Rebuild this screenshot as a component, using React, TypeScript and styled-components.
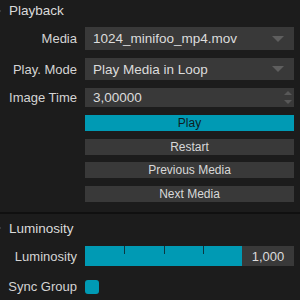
import styled, { createGlobalStyle } from 'styled-components'

const GlobalStyle = createGlobalStyle`
  html, body {
    margin: 0;
    padding: 0;
    background: #1c1c1c;
  }
  body {
    width: 300px;
    height: 300px;
    overflow: hidden;
    font-family: "Liberation Sans", Arial, sans-serif;
  }
`

const Panel = styled.div`
  width: 300px;
  height: 300px;
  background: #1c1c1c;
  color: #d6d6d6;
  display: flex;
  flex-direction: column;
`

const Section = styled.section<{ $last?: boolean }>`
  display: flex;
  flex-direction: column;
  padding-bottom: ${p => (p.$last ? '0' : '10px')};
  border-bottom: ${p => (p.$last ? 'none' : '2px solid #101010')};
`

const Header = styled.div<{ $h: number }>`
  position: relative;
  height: ${p => p.$h}px;
  display: flex;
  align-items: center;
  padding-left: 9px;
  font-size: 13.5px;
  color: #dadada;
`

const Disclosure = styled.span`
  position: absolute;
  left: -3px;
  top: 50%;
  margin-top: -3px;
  width: 0;
  height: 0;
  border-top: 3px solid transparent;
  border-bottom: 3px solid transparent;
  border-left: 4px solid #6a6a6a;
`

const Row = styled.div<{ $h: number; $mt?: number }>`
  display: grid;
  grid-template-columns: 85px 1fr;
  height: ${p => p.$h}px;
  margin-top: ${p => p.$mt ?? 0}px;
  padding-right: 6px;
  align-items: center;
`

const Label = styled.div`
  text-align: right;
  padding-right: 8px;
  font-size: 13px;
  color: #d4d4d4;
  white-space: nowrap;
`

const Field = styled.div`
  position: relative;
  height: 100%;
  background: #393939;
  display: flex;
  align-items: center;
  padding-left: 8px;
  font-size: 13.5px;
  color: #dcdcdc;
`

const Caret = styled.span`
  position: absolute;
  right: 10px;
  top: 50%;
  margin-top: -3px;
  width: 0;
  height: 0;
  border-left: 6px solid transparent;
  border-right: 6px solid transparent;
  border-top: 6px solid #5e5e5e;
`

const Spinner = styled.span`
  position: absolute;
  right: 1px;
  top: 3px;
  bottom: 3px;
  width: 10px;
  display: flex;
  flex-direction: column;
  justify-content: space-between;
  align-items: center;
`

const Arrow = styled.span<{ $up?: boolean }>`
  width: 0;
  height: 0;
  border-left: 4px solid transparent;
  border-right: 4px solid transparent;
  ${p => (p.$up ? 'border-bottom: 4px solid #585858;' : 'border-top: 4px solid #585858;')}
`

const Button = styled.div<{ $active?: boolean }>`
  height: 100%;
  display: flex;
  align-items: center;
  justify-content: center;
  font-size: 12px;
  background: ${p => (p.$active ? '#009ab4' : '#393939')};
  color: ${p => (p.$active ? '#0e1d22' : '#d8d8d8')};
`

const Slider = styled.div`
  height: 100%;
  display: flex;
`

const Track = styled.div`
  position: relative;
  flex: 1;
  background: #009ab4;
`

const Tick = styled.span`
  position: absolute;
  top: 0;
  width: 1px;
  height: 8px;
  background: #0c3640;
`

const SliderValue = styled.div`
  width: 52px;
  background: #393939;
  display: flex;
  align-items: center;
  justify-content: center;
  font-size: 13px;
  color: #dcdcdc;
`

const Checkbox = styled.span`
  width: 14px;
  height: 14px;
  border-radius: 3px;
  background: #009ab4;
`

const buttons = ['Restart', 'Previous Media', 'Next Media']
const gaps = [8, 7, 8]

export default function App() {
  const ticks = [39, 79, 118]
  return (
    <Panel>
      <GlobalStyle />
      <Section>
        <Header $h={21}>
          <Disclosure />
          Playback
        </Header>
        <Row $h={23} $mt={6}>
          <Label>Media</Label>
          <Field>
            1024_minifoo_mp4.mov
            <Caret />
          </Field>
        </Row>
        <Row $h={22} $mt={8}>
          <Label>Play. Mode</Label>
          <Field>
            Play Media in Loop
            <Caret />
          </Field>
        </Row>
        <Row $h={19} $mt={8}>
          <Label>Image Time</Label>
          <Field>
            3,00000
            <Spinner>
              <Arrow $up />
              <Arrow />
            </Spinner>
          </Field>
        </Row>
        <Row $h={16} $mt={8}>
          <span />
          <Button $active>Play</Button>
        </Row>
        {buttons.map((b, i) => (
          <Row key={b} $h={16} $mt={gaps[i]}>
            <span />
            <Button>{b}</Button>
          </Row>
        ))}
      </Section>
      <Section $last>
        <Header $h={28}>
          <Disclosure />
          Luminosity
        </Header>
        <Row $h={20} $mt={4}>
          <Label>Luminosity</Label>
          <Slider>
            <Track>
              {ticks.map(t => (
                <Tick key={t} style={{ left: t }} />
              ))}
            </Track>
            <SliderValue>1,000</SliderValue>
          </Slider>
        </Row>
        <Row $h={14} $mt={13}>
          <Label>Sync Group</Label>
          <Checkbox />
        </Row>
      </Section>
    </Panel>
  )
}
